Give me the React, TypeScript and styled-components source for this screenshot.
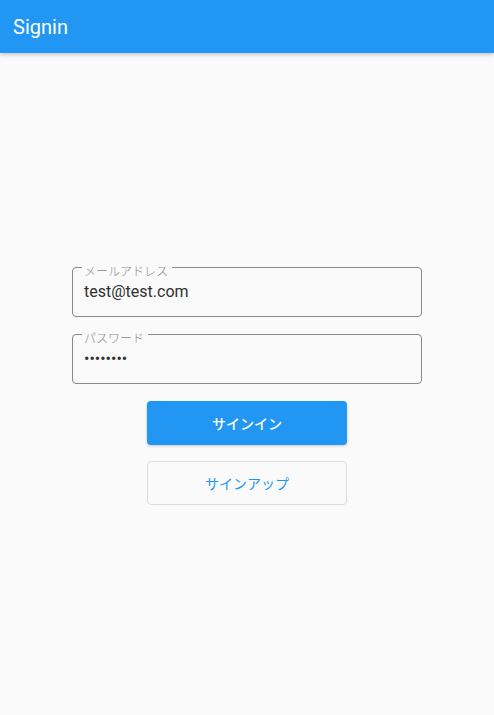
import { createGlobalStyle, styled } from 'styled-components';

const GlobalStyle = createGlobalStyle`
  html, body {
    margin: 0;
    padding: 0;
    background: #fafafa;
    font-family: Roboto, "Noto Sans CJK JP", sans-serif;
  }
`;

export default function App() {
  return (
    <Page>
      <GlobalStyle />
      <AppBar>
        <AppTitle>Signin</AppTitle>
      </AppBar>

      <Body>
        <Form>
          <Field>
            <Legend>メールアドレス</Legend>
            <Input type='text' defaultValue='test@test.com' />
          </Field>

          <Field>
            <Legend>パスワード</Legend>
            <Input type='password' defaultValue='password' />
          </Field>

          <Buttons>
            <PrimaryButton>サインイン</PrimaryButton>
            <OutlineButton>サインアップ</OutlineButton>
          </Buttons>
        </Form>
      </Body>
    </Page>
  );
}

const Page = styled.div`
  display: flex;
  flex-direction: column;
  height: 715px;
  background: #fafafa;
`;

const AppBar = styled.header`
  display: flex;
  align-items: center;
  height: 53px;
  padding: 0 13px;
  background-color: #2196f3;
  box-shadow: 0 2px 4px rgba(0, 0, 0, 0.2);
  flex-shrink: 0;
  z-index: 1;
`;

const AppTitle = styled.h1`
  margin: 0;
  color: #fff;
  font-size: 20px;
  font-weight: 400;
  font-family: Roboto, sans-serif;
`;

const Body = styled.main`
  flex: 1;
  display: flex;
  align-items: center;
  justify-content: center;
  padding-bottom: 5px;
`;

const Form = styled.div`
  display: flex;
  flex-direction: column;
  width: 350px;
  gap: 8px;
`;

const Field = styled.fieldset`
  margin: 0;
  padding: 0 11px;
  height: 59px;
  box-sizing: border-box;
  border: 1px solid #8a8a8a;
  border-radius: 4px;
  display: flex;
  align-items: flex-start;
`;

const Legend = styled.legend`
  padding: 7px 4px 0 2px;
  margin-left: -2px;
  font-size: 12px;
  line-height: 12px;
  font-weight: 300;
  color: #8a8a8a;
  font-family: "Noto Sans CJK JP", sans-serif;
`;

const Input = styled.input`
  border: none;
  outline: none;
  background: transparent;
  padding: 0;
  margin-top: 2px;
  width: 100%;
  height: 24px;
  font-size: 16px;
  color: #303030;
  font-family: Roboto, sans-serif;
  letter-spacing: 0;
`;

const Buttons = styled.div`
  display: flex;
  flex-direction: column;
  align-items: center;
  gap: 16px;
  margin-top: 9px;
`;

const BaseButton = styled.button`
  width: 200px;
  height: 44px;
  border-radius: 4px;
  font-size: 14px;
  font-family: "Noto Sans CJK JP", sans-serif;
  cursor: pointer;
`;

const PrimaryButton = styled(BaseButton)`
  background-color: #2196f3;
  color: #fff;
  border: none;
  font-weight: 500;
  box-shadow: 0 1px 3px rgba(0, 0, 0, 0.2);
`;

const OutlineButton = styled(BaseButton)`
  background: transparent;
  color: #2196f3;
  border: 1px solid #dcdcdc;
`;
